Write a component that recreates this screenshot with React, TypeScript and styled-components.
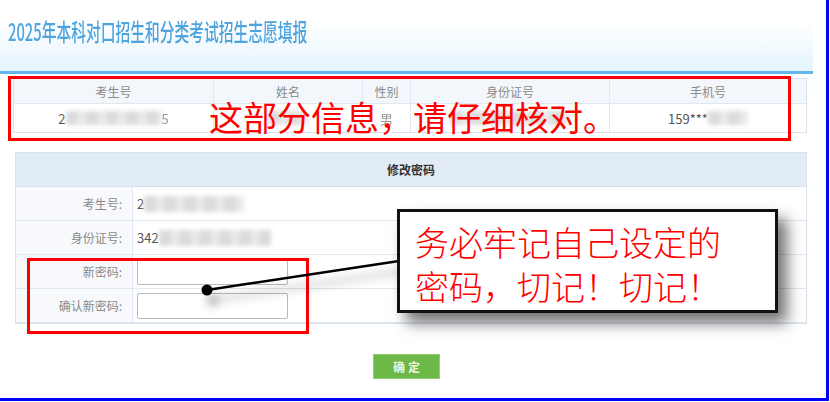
import React from "react";
import styled, { createGlobalStyle } from "styled-components";

const Global = createGlobalStyle`
  html, body { margin: 0; padding: 0; background: #fff; }
  body { font-family: "Noto Sans CJK SC", "Noto Sans", sans-serif; }
`;

const Page = styled.div`
  position: relative;
  width: 826px;
  height: 398px;
  border-right: 3px solid #0000ff;
  border-bottom: 3px solid #0000ff;
  overflow: hidden;
  display: flex;
  flex-direction: column;
`;

const Header = styled.div`
  width: 813px;
  height: 71px;
  background: linear-gradient(to bottom, #ffffff 0%, #ffffff 30%, #e4f4fd 100%);
  border-bottom: 3px solid #62b4ea;
  box-sizing: content-box;
  display: flex;
  align-items: flex-start;
`;

const Title = styled.h1`
  margin: 16px 0 0 8px;
  font-size: 24px;
  line-height: 30px;
  font-weight: 500;
  color: #4ea4de;
  white-space: nowrap;
  transform: scaleX(0.615);
  transform-origin: left center;
`;

const Content = styled.div`
  display: flex;
  flex-direction: column;
  padding: 4px 0 0 13px;
`;

const InfoTable = styled.div`
  width: 794px;
  box-sizing: border-box;
  border: 1px solid #d9e3ee;
  display: grid;
  grid-template-columns: 200px 149px 48px 199px 1fr;
`;

const HeadCell = styled.div`
  height: 24px;
  background: #f3f7fc;
  border-right: 1px solid #dfe7f1;
  border-bottom: 1px solid #dfe7f1;
  display: flex;
  align-items: center;
  justify-content: center;
  font-size: 12px;
  color: #8a8a8a;
  &:nth-child(5) { border-right: none; }
`;

const DataCell = styled.div`
  height: 28px;
  background: #fff;
  border-right: 1px solid #dfe7f1;
  display: flex;
  align-items: center;
  justify-content: center;
  font-size: 13px;
  color: #555;
  &:last-child { border-right: none; }
`;

const Blur = styled.span<{ $w: number; $h?: number }>`
  display: inline-block;
  width: ${(p) => p.$w}px;
  height: ${(p) => p.$h ?? 14}px;
  background: repeating-linear-gradient(
    to right,
    #d8d8d8 0px,
    #d8d8d8 12px,
    #e8e8e8 12px,
    #e8e8e8 20px
  );
  filter: blur(2px);
  opacity: 0.9;
`;

const Faded = styled.span`
  color: #999;
  filter: blur(0.6px);
`;

const PwdTable = styled.div`
  margin: 19px 0 0 2px;
  width: 792px;
  box-sizing: border-box;
  border: 1px solid #d9e3ee;
  display: grid;
  grid-template-columns: 117px 1fr;
`;

const PwdHead = styled.div`
  grid-column: 1 / 3;
  height: 33px;
  background: #e2ecf6;
  border-bottom: 1px solid #d5e0ec;
  display: flex;
  align-items: center;
  justify-content: center;
  font-size: 12px;
  font-weight: 700;
  color: #333;
`;

const Label = styled.div<{ $last?: boolean }>`
  height: ${(p) => (p.$last ? 34 : 33)}px;
  background: #f7f9fc;
  border-right: 1px solid #dfe7f1;
  border-bottom: ${(p) => (p.$last ? "none" : "1px solid #dfe7f1")};
  display: flex;
  align-items: center;
  justify-content: flex-end;
  padding-right: 10px;
  font-size: 12px;
  color: #8a8a8a;
`;

const Value = styled.div<{ $last?: boolean }>`
  height: ${(p) => (p.$last ? 34 : 33)}px;
  background: #fff;
  border-bottom: ${(p) => (p.$last ? "none" : "1px solid #dfe7f1")};
  display: flex;
  align-items: center;
  padding-left: 4px;
  font-size: 13px;
  color: #555;
`;

const Input = styled.input`
  width: 151px;
  height: 26px;
  box-sizing: border-box;
  border: 1px solid #b9b9b9;
  border-radius: 2px;
  background: #fff;
  outline: none;
`;

const ButtonRow = styled.div`
  display: flex;
  justify-content: center;
  padding: 30px 7px 0 0;
  width: 794px;
  box-sizing: border-box;
`;

const Submit = styled.button`
  width: 67px;
  height: 25px;
  background: #6cb947;
  border: 1px solid #8fcf72;
  color: #eaf6e4;
  font-family: "Noto Sans CJK SC", sans-serif;
  font-size: 12px;
  font-weight: 700;
  letter-spacing: 3px;
  padding: 0 0 0 3px;
`;

const RedBox = styled.div<{ $x: number; $y: number; $w: number; $h: number }>`
  position: absolute;
  left: ${(p) => p.$x}px;
  top: ${(p) => p.$y}px;
  width: ${(p) => p.$w}px;
  height: ${(p) => p.$h}px;
  box-sizing: border-box;
  border: 3px solid #ff0000;
  pointer-events: none;
`;

const RedNote = styled.div`
  position: absolute;
  left: 209px;
  top: 96px;
  font-size: 34px;
  line-height: 42px;
  color: #ff0000;
  white-space: nowrap;
  font-family: "Noto Sans CJK SC", sans-serif;
`;

const Callout = styled.div`
  position: absolute;
  left: 397px;
  top: 209px;
  width: 381px;
  height: 104px;
  box-sizing: border-box;
  border: 3px solid #111;
  background: #fff;
  box-shadow: 9px 10px 14px rgba(0, 0, 0, 0.55);
  padding: 8px 0 0 15px;
  font-size: 34px;
  line-height: 44px;
  color: #ff0000;
  font-weight: 300;
  white-space: nowrap;
`;

const Pointer = styled.svg`
  position: absolute;
  left: 195px;
  top: 250px;
  width: 210px;
  height: 60px;
  overflow: visible;
  filter: drop-shadow(6px 10px 5px rgba(0, 0, 0, 0.35));
`;

export default function App() {
  return (
    <>
      <Global />
      <Page>
        <Header>
          <Title>2025年本科对口招生和分类考试招生志愿填报</Title>
        </Header>
        <Content>
          <InfoTable>
            <HeadCell>考生号</HeadCell>
            <HeadCell>姓名</HeadCell>
            <HeadCell>性别</HeadCell>
            <HeadCell>身份证号</HeadCell>
            <HeadCell>手机号</HeadCell>
            <DataCell>
              2<Blur $w={96} />
              <Faded>5</Faded>
            </DataCell>
            <DataCell>
              <Blur $w={40} />
            </DataCell>
            <DataCell>
              <Faded>男</Faded>
            </DataCell>
            <DataCell>
              <Blur $w={120} />
            </DataCell>
            <DataCell>
              159***
              <Blur $w={40} />
            </DataCell>
          </InfoTable>
          <PwdTable>
            <PwdHead>修改密码</PwdHead>
            <Label>考生号:</Label>
            <Value>
              2<Blur $w={100} $h={16} />
            </Value>
            <Label>身份证号:</Label>
            <Value>
              342<Blur $w={112} $h={16} />
            </Value>
            <Label>新密码:</Label>
            <Value>
              <Input type="password" />
            </Value>
            <Label>确认新密码:</Label>
            <Value>
              <Input type="password" />
            </Value>
          </PwdTable>
          <ButtonRow>
            <Submit>确定</Submit>
          </ButtonRow>
        </Content>

        <RedBox $x={8} $y={76} $w={783} $h={65} />
        <RedNote>这部分信息，请仔细核对。</RedNote>
        <RedBox $x={27} $y={258} $w={282} $h={76} />
        <Pointer viewBox="0 0 210 60">
          <line x1="12" y1="40" x2="204" y2="11" stroke="#000" strokeWidth="2.5" />
          <circle cx="12" cy="40" r="5.5" fill="#000" />
        </Pointer>
        <Callout>
          务必牢记自己设定的
          <br />
          密码，切记！切记！
        </Callout>
      </Page>
    </>
  );
}
